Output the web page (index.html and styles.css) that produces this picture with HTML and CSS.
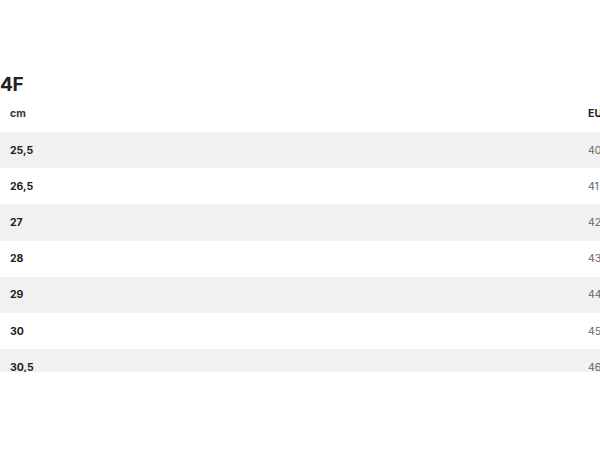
FILE: index.html
```html
<!DOCTYPE html>
<html>
<head>
<meta charset="utf-8">
<link rel="stylesheet" href="styles.css">
</head>
<body>
<div class="page">
  <h2 class="brand">4F</h2>
  <div class="table-wrap">
    <div class="table">
      <div class="row head"><span class="c1">cm</span><span class="c2">EU</span></div>
      <div class="row alt"><span class="c1">25,5</span><span class="c2">40</span></div>
      <div class="row"><span class="c1">26,5</span><span class="c2">41</span></div>
      <div class="row alt"><span class="c1">27</span><span class="c2">42</span></div>
      <div class="row"><span class="c1">28</span><span class="c2">43</span></div>
      <div class="row alt"><span class="c1">29</span><span class="c2">44</span></div>
      <div class="row"><span class="c1">30</span><span class="c2">45</span></div>
      <div class="row alt"><span class="c1">30,5</span><span class="c2">46</span></div>
      <div class="row"><span class="c1">31</span><span class="c2">47</span></div>
    </div>
  </div>
</div>
</body>
</html>
```
FILE: styles.css
```css
html, body {
  margin: 0;
  padding: 0;
  background: #fff;
  overflow: hidden;
}
.page {
  width: 600px;
  height: 450px;
  overflow: hidden;
  padding-top: 74px;
  box-sizing: border-box;
  font-family: "Inter", "Liberation Sans", sans-serif;
}
.brand {
  margin: 0;
  font-size: 19px;
  line-height: 21px;
  font-weight: 700;
  color: #222;
  letter-spacing: -0.3px;
}
.table-wrap {
  height: 277px;
  overflow: hidden;
}
.table {
  width: 640px;
}
.row {
  display: flex;
  justify-content: space-between;
  align-items: center;
  height: 36.2px;
  padding: 0 10px;
  box-sizing: border-box;
}
.row.head {
  height: 37px;
}
.row.alt {
  background: #f1f1f1;
}
.c1 {
  font-size: 10.5px;
  font-weight: 700;
  color: #222;
}
.c2 {
  width: 42px;
  font-size: 10.5px;
  color: #666;
}
.head .c2 {
  font-weight: 700;
  color: #222;
  margin-left: -2px;
}
.head .c1 {
  color: #333;
}
```
